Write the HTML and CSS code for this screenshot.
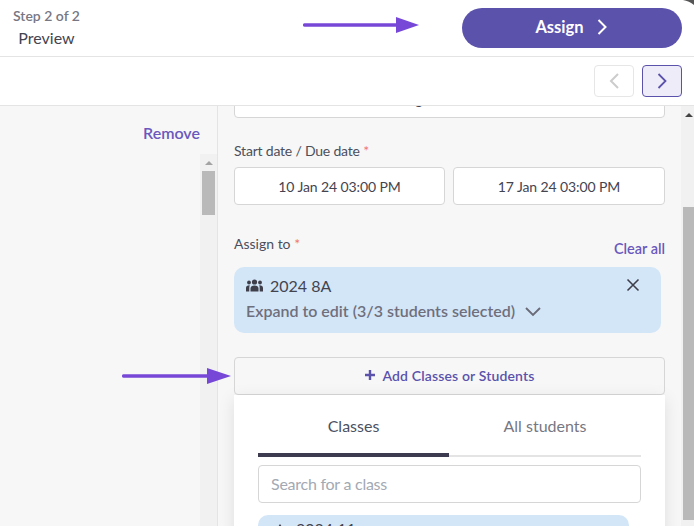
FILE: index.html
```html
<!DOCTYPE html>
<html lang="en">
<head>
<meta charset="utf-8">
<title>Assign</title>
<link rel="stylesheet" href="styles.css">
</head>
<body>
<div class="app">
  <header class="header">
    <div class="steps">
      <div class="step-count">Step 2 of 2</div>
      <div class="step-name">Preview</div>
    </div>
    <button class="assign-btn">Assign
      <svg width="10" height="16" viewBox="0 0 10 16"><path d="M1.500 1l7 7-7 7" fill="none" stroke="#fff" stroke-width="2"/></svg>
    </button>
  </header>
  <div class="toolbar">
    <button class="nav-btn nav-off"><svg width="10" height="16" viewBox="0 0 10 16"><path d="M9 1L2 8l7 7" fill="none" stroke="#ccc" stroke-width="2"/></svg></button>
    <button class="nav-btn nav-on"><svg width="10" height="16" viewBox="0 0 10 16"><path d="M1.500 1l7 7-7 7" fill="none" stroke="#5b52ac" stroke-width="1.800"/></svg></button>
  </div>
  <div class="body">
    <aside class="sidebar">
      <a class="remove">Remove</a>
      <div class="side-track">
        <span class="side-up"></span>
        <span class="side-thumb"></span>
      </div>
    </aside>
    <main class="main">
      <div class="cut-input">Assessing</div>
      <div class="label label-date">Start date / Due date <span class="req">*</span></div>
      <div class="dates">
        <div class="date date-start">10 Jan 24 03:00 PM</div>
        <div class="date date-due">17 Jan 24 03:00 PM</div>
      </div>
      <div class="assign-head">
        <div class="label">Assign to <span class="req">*</span></div>
        <a class="clear">Clear all</a>
      </div>
      <div class="class-card">
        <div class="card-top">
          <svg class="group-icon" width="17" height="13" viewBox="0 0 17 13" fill="#3f3f4b"><circle cx="8.500" cy="3" r="2.600"/><circle cx="3" cy="3.500" r="1.900"/><circle cx="14" cy="3.500" r="1.900"/><path d="M4.500 12.500V9.500C4.500 7.500 6 6.500 8.500 6.500S12.500 7.500 12.500 9.500V12.500Z"/><path d="M0 12.500V9C0 7 1.500 6.200 3.800 6.300 3.300 7.200 3.300 8.500 3.300 12.500Z"/><path d="M17 12.500V9C17 7 15.500 6.200 13.200 6.300 13.700 7.200 13.700 8.500 13.700 12.500Z"/></svg>
          <span class="card-name">2024 8A</span>
          <svg class="card-x" width="14" height="14" viewBox="0 0 14 14"><path d="M1.500 1.500l11 11M12.500 1.500l-11 11" stroke="#3f3f4b" stroke-width="1.600" fill="none"/></svg>
        </div>
        <div class="card-sub">Expand to edit (3/3 students selected)
          <svg width="18" height="11" viewBox="0 0 18 11"><path d="M2 2l7 7 7-7" fill="none" stroke="#6b6b78" stroke-width="1.900"/></svg>
        </div>
      </div>
      <button class="add-btn">
        <svg width="12" height="12" viewBox="0 0 12 12"><path d="M6 1v10M1 6h10" stroke="#5b52ac" stroke-width="2.400" fill="none"/></svg>
        Add Classes or Students
      </button>
      <div class="popover">
        <div class="tabs">
          <div class="tab tab-on">Classes</div>
          <div class="tab">All students</div>
        </div>
        <input class="search" placeholder="Search for a class">
        <div class="class-row">
          <svg width="8" height="6" viewBox="0 0 8 6"><path d="M4 0l4 6H0z" fill="#3f3f4b"/></svg>
          <span>2024 11</span>
        </div>
      </div>
    </main>
    <div class="main-track">
      <span class="main-up"></span>
      <span class="main-thumb"></span>
    </div>
  </div>
  <svg class="arrow arrow-top" width="116" height="18" viewBox="0 0 116 18"><path d="M1.700 9H96" stroke="#7748d8" stroke-width="3.500" stroke-linecap="round"/><path d="M93 1l23 8-23 8z" fill="#7748d8"/></svg>
  <svg class="arrow arrow-mid" width="109" height="18" viewBox="0 0 109 18"><path d="M1.700 9H88" stroke="#7748d8" stroke-width="3.500" stroke-linecap="round"/><path d="M85 1l24 8-24 8z" fill="#7748d8"/></svg>
  <svg class="corner" width="11" height="5" viewBox="0 0 11 5"><path d="M0 0h11v5C8 2.500 4 .8 0 0z" fill="#555"/></svg>
</div>
</body>
</html>
```
FILE: styles.css
```css
* { box-sizing: border-box; }
html, body { margin: 0; height: 100%; overflow: hidden; background: #fff; }
body { font-family: Lato, "Open Sans", sans-serif; color: #44444f; }
button { font-family: inherit; cursor: pointer; }

.app { position: relative; width: 694px; height: 526px; display: flex; flex-direction: column; overflow: hidden; }

.header { height: 57px; flex: none; display: flex; justify-content: space-between; border-bottom: 1px solid #e4e4e4; padding: 8px 12px 0 13px; }
.steps { text-align: center; }
.step-count { font-size: 14px; font-weight: 600; color: #777783; line-height: 16px; }
.step-name { font-size: 16px; color: #44444f; line-height: 20px; margin-top: 4px; }
.assign-btn { width: 220px; height: 40px; border: 0; border-radius: 20px; background: #5b52ac; color: #fff; font-size: 16.500px; font-weight: 700; display: flex; align-items: center; justify-content: center; gap: 13px; padding: 0 2px 2px 0; }

.toolbar { height: 49px; flex: none; display: flex; justify-content: flex-end; align-items: flex-start; gap: 8px; padding: 8px 12px 0 0; border-bottom: 1px solid #e4e4e4; }
.nav-btn { width: 40px; height: 32px; border-radius: 4px; padding: 0; display: flex; align-items: center; justify-content: center; }
.nav-off { background: #fff; border: 1px solid #e6e6e6; }
.nav-on { background: #eeecf8; border: 1px solid #5b52ac; }

.body { flex: 1; min-height: 0; display: flex; }

.sidebar { width: 218px; flex: none; background: #f7f7f7; border-right: 1px solid #e4e4e4; display: flex; flex-direction: column; align-items: flex-end; }
.remove { font-size: 16px; font-weight: 600; color: #6a58bd; line-height: 18px; margin: 18px 17px 0 0; }
.side-track { width: 17px; flex: 1; margin-top: 12px; background: #f1f1f1; display: flex; flex-direction: column; align-items: center; padding-top: 7px; }
.side-up { width: 0; height: 0; border-left: 4px solid transparent; border-right: 4px solid transparent; border-bottom: 4px solid #a3a3a3; }
.side-thumb { width: 13px; height: 44px; background: #b9b9b9; margin-top: 6px; }

.main { flex: 1; min-width: 0; background: #f7f7f7; padding: 0 16px; overflow: hidden; }
.cut-input { height: 40px; margin-top: -28px; background: #fff; border: 1px solid #d6d6d6; border-radius: 4px; font-size: 14px; line-height: 42px; color: #44444f; padding-left: 128px; }
.label { font-size: 14px; line-height: 18px; color: #4b4f5c; }
.label-date { margin-top: 24px; letter-spacing: -.2px; }
.req { color: #f0766e; }
.dates { display: flex; gap: 8px; margin-top: 7px; }
.date { height: 38px; background: #fff; border: 1px solid #d6d6d6; border-radius: 4px; display: flex; align-items: center; justify-content: center; font-size: 14px; letter-spacing: -.1px; color: #44444f; }
.date-start { width: 211px; flex: none; }
.date-due { flex: 1; }
.assign-head { display: flex; justify-content: space-between; align-items: flex-start; margin-top: 30px; }
.clear { font-size: 14.500px; font-weight: 600; color: #6a58bd; line-height: 18px; margin-top: 5px; }
.class-card { width: 427px; height: 66px; margin-top: 9px; background: #d3e6f8; border-radius: 10px; padding: 7px 12px; }
.card-top { display: flex; align-items: center; height: 22px; }
.card-name { font-size: 16px; color: #44444f; margin-left: 7px; }
.card-x { margin-left: auto; margin-right: 9px; }
.card-sub { display: flex; align-items: center; gap: 9px; font-size: 16px; font-weight: 600; color: #6f6f7c; margin-top: 5px; line-height: 20px; }
.add-btn { width: 100%; height: 38px; margin-top: 24px; display: flex; align-items: center; justify-content: center; gap: 6px; background: #f7f7f7; border: 1px solid #d6d6d6; border-radius: 4px; color: #5b52ac; font-size: 14px; font-weight: 600; letter-spacing: .15px; padding: 0 0 2px; }
.popover { background: #fff; padding: 0 24px; height: 200px; box-shadow: 0 4px 16px rgba(0,0,0,.1); }
.tabs { display: flex; padding-top: 20px; height: 62px; }
.tab { flex: 1; text-align: center; font-size: 16px; line-height: 22px; color: #777783; border-bottom: 2px solid #e4e4e4; }
.tab-on { flex: none; width: 191px; color: #4b5262; border-bottom: 4px solid #3d3b4f; }
.search { display: block; width: 100%; height: 38px; margin-top: 8px; padding: 0 12px 2px; background: #fff; border: 1px solid #d6d6d6; border-radius: 4px; font-family: inherit; font-size: 16px; letter-spacing: -.25px; }
.search::placeholder { color: #a3a9b3; opacity: 1; }
.class-row { width: 371px; height: 40px; margin-top: 12px; background: #d3e6f8; border-radius: 10px; padding: 4px 18px; font-size: 16px; display: flex; gap: 12px; align-items: flex-start; color: #44444f; }
.class-row svg { margin-top: 5px; }

.main-track { width: 13px; flex: none; background: #f1f1f1; display: flex; flex-direction: column; align-items: flex-end; padding-top: 7px; }
.main-up { width: 0; height: 0; margin-right: 1px; border-left: 4px solid transparent; border-right: 4px solid transparent; border-bottom: 4px solid #444; }
.main-thumb { width: 11px; height: 313px; background: #b9b9b9; margin-top: 90px; }

.arrow { position: absolute; }
.arrow-top { left: 303px; top: 16px; }
.arrow-mid { left: 122px; top: 367px; }
.corner { position: absolute; right: 0; top: 0; }
```
